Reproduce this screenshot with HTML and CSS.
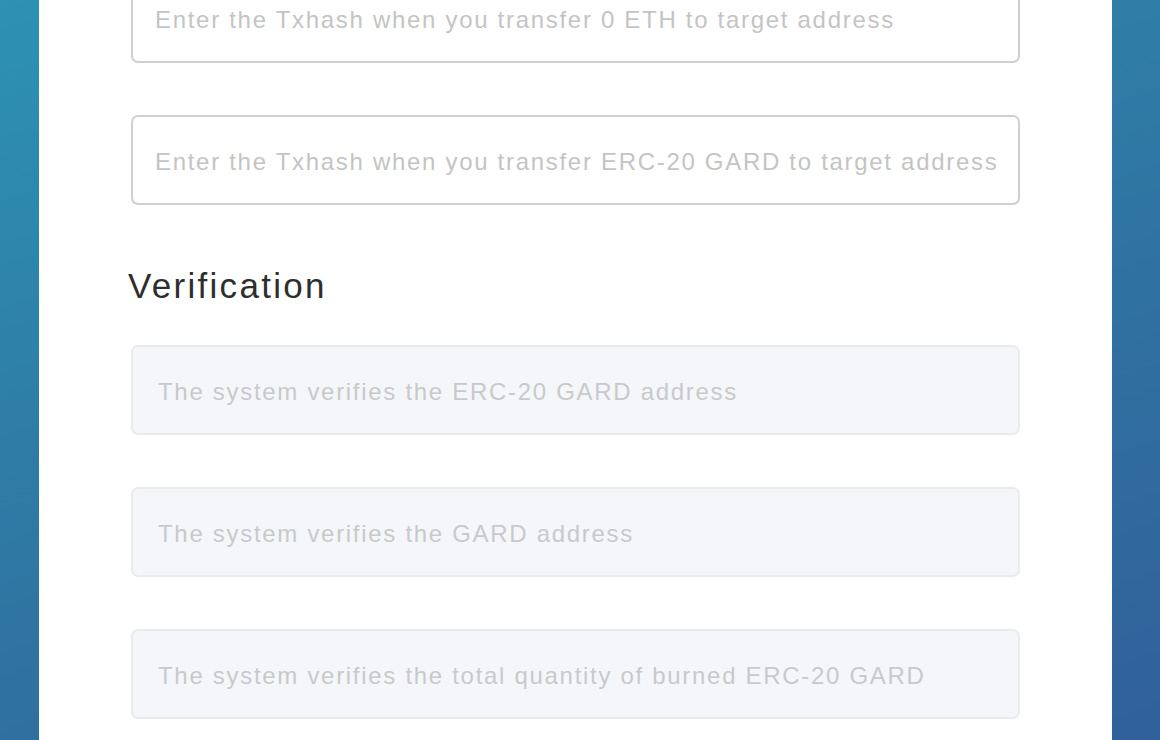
FILE: index.html
```html
<!DOCTYPE html>
<html>
<head>
  <title>Burn GARD</title>
  <link rel="stylesheet" href="styles.css">
</head>
<body>
  <div class="card">
    <div class="fields">
      <input type="text" class="field first" placeholder="Enter the Txhash when you transfer 0 ETH to target address">
      <input type="text" class="field" placeholder="Enter the Txhash when you transfer ERC-20 GARD to target address">
    </div>

    <h2 class="section-title">Verification</h2>

    <div class="fields">
      <input type="text" class="field" disabled placeholder="The system verifies the ERC-20 GARD address">
      <input type="text" class="field" disabled placeholder="The system verifies the GARD address">
      <input type="text" class="field" disabled placeholder="The system verifies the total quantity of burned ERC-20 GARD">
    </div>
  </div>
</body>
</html>
```

FILE: styles.css
```css
html, body {
  height: 100%;
}

body {
  margin: 0;
  overflow: hidden;
  font-family: "Liberation Sans", Arial, sans-serif;
  background: linear-gradient(160deg, #2d92b3 0%, #2f74a2 55%, #31609a 100%);
}

.card {
  margin-left: 39px;
  width: 1073px;
  min-height: 100%;
  box-sizing: border-box;
  background-color: #ffffff;
  padding: 0 92px 40px;
}

.fields {
  display: flex;
  flex-direction: column;
  gap: 52px;
}

.field {
  height: 90px;
  box-sizing: border-box;
  padding: 4px 22px 0;
  border: 2px solid #d0d0d0;
  border-radius: 7px;
  background-color: #ffffff;
  font-family: inherit;
  font-size: 24px;
  letter-spacing: 1.7px;
  color: #333333;
  outline: none;
}

.field.first {
  margin-top: -27px;
}

.field::placeholder {
  color: #c4c4c4;
}

.field:disabled {
  background-color: #f5f6fa;
  border-color: #eaebef;
  padding-left: 25px;
}

.field:disabled::placeholder {
  color: #c9c9cc;
}

.section-title {
  margin: 60px 0 38px -3px;
  font-size: 35px;
  font-weight: normal;
  line-height: 42px;
  letter-spacing: 2.3px;
  color: #2e2e2e;
}
```
